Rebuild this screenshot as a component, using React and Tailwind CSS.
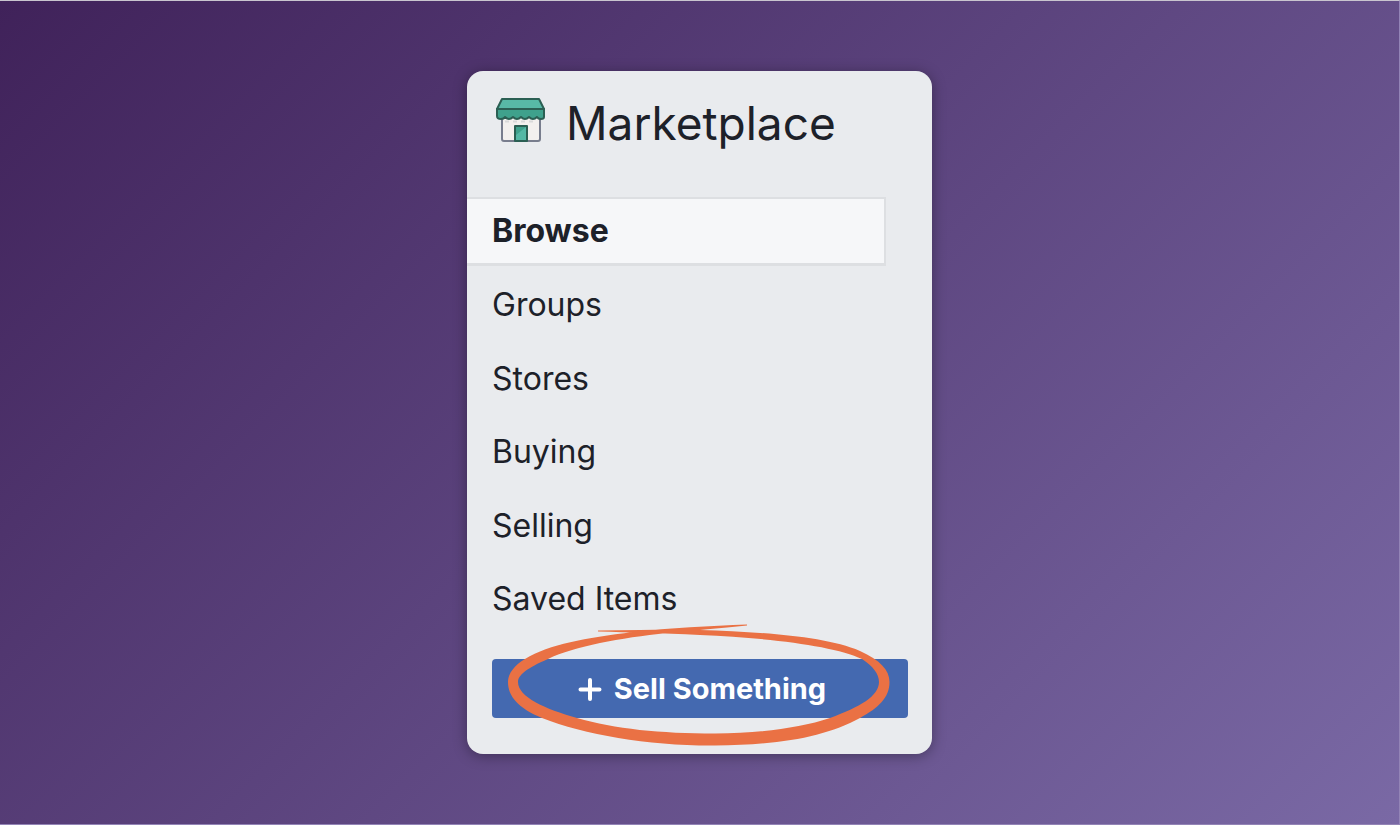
import { clsx } from "clsx";

const links = ["Browse", "Groups", "Stores", "Buying", "Selling", "Saved Items"];

const StoreIcon = () => (
  <svg
    viewBox="0 0 50 46"
    className="w-[50px] h-[46px]"
    fill="none"
    strokeWidth="2"
    strokeLinejoin="round"
    aria-hidden="true"
  >
    <path d="M6 18V42Q6 44 8 44H42Q44 44 44 42V18Z" fill="#f3f0ee" stroke="#787d8d" />
    <path d="M9 24.5h4M17 24.5h4M25 24.5h4M33 24.5h4" stroke="#d9d9da" />
    <path d="M19 44V29H31V44Z" fill="#55b8a5" />
    <path d="M20 38V30H30Z" fill="#3fa18c" />
    <path d="M19 44V29H31V44Z" stroke="#2b5f53" />
    <path
      d="M1 12H48V20Q48 22 45 22Q42 22 41 20Q37 24 33 20Q29 24 25 20Q21 24 17 20Q13 24 9 20Q8 22 5 22Q1 22 1 19Z"
      fill="#3fa18c"
      stroke="#2b5f53"
    />
    <path d="M6 2H43L48 12H1Z" fill="#58b9a6" stroke="#2b5f53" />
  </svg>
);

// hand drawn ring around the sell button
const Highlight = () => (
  <svg
    viewBox="0 0 400 130"
    className="absolute left-2 -top-[39px] w-[400px] h-[130px] pointer-events-none"
    aria-hidden="true"
  >
    <path
      fill="#ea7144"
      d="M98 10.500 L140 10 C160 9.500 180 9.500 200 10 C260 12 325 16 360 31 C380 40 389.5 50 389.5 62
      C389.5 78 378 88 360 98 C325 117 280 125 215 125.5 C150 126 85 115 42 98
      C18 88 8 76 8 62 C8 53 15 45 25 39 C50 24 85 18 133 12 C170 8 210 6 247 4.500
      L247 5.500 C220 8 195 10.500 167 13 C120 18 75 26 48 39 C27 48 18 55 18 62
      C18 77 45 89 77 98 C115 109 160 113.5 215 113.5 C260 113 300 108 330 98
      C360 87 379 76 379 62 C379 54 373 46 362 39 C335 26 270 18 200 15
      C160 13 130 12.500 98 11.500 Z"
    />
  </svg>
);

const App = () => {
  return (
    <main className="min-h-screen flex items-center justify-center border-y border-r border-t-[#c9c5cf] border-r-[#9384b6] border-b-[#9384b6] bg-[linear-gradient(135deg,#40225a,#7a69a5)] font-['Inter',sans-serif] text-[#1d2129]">
      <section className="w-full max-w-[465px] rounded-2xl bg-[#e9ebee] pt-[26px] pb-9 shadow-[0_2px_14px_rgba(0,0,0,0.35)]">
        <header className="flex items-start gap-5 pl-[29px]">
          <StoreIcon />
          <h1 className="text-[46px] leading-[52px]">Marketplace</h1>
        </header>

        <nav className="mt-[46px]">
          <ul className="grid grid-rows-6 h-[441px]">
            {links.map((name, idx) => (
              <li key={name} className="flex items-center">
                <a
                  href="#"
                  className={clsx(
                    "flex items-center h-[69px] w-[419px] pl-[25px] text-[32px]",
                    idx === 0 && "bg-[#f6f7f9] border-2 border-b-[3px] border-l-0 border-[#dddfe2] font-bold"
                  )}
                >
                  {name}
                </a>
              </li>
            ))}
          </ul>
        </nav>

        <div className="relative mt-[23px] ml-[25px] mr-6">
          <button
            type="button"
            className="flex items-center justify-center gap-3 w-full h-[59px] rounded bg-[#4469b0] pl-1 text-[29px] font-bold text-white"
          >
            <svg viewBox="0 0 24 24" className="size-6" stroke="currentColor" strokeWidth="4" strokeLinecap="round" aria-hidden="true">
              <path d="M12 3v19M2.500 12.500h19" />
            </svg>
            Sell Something
          </button>
          <Highlight />
        </div>
      </section>
    </main>
  );
};

export default App;
